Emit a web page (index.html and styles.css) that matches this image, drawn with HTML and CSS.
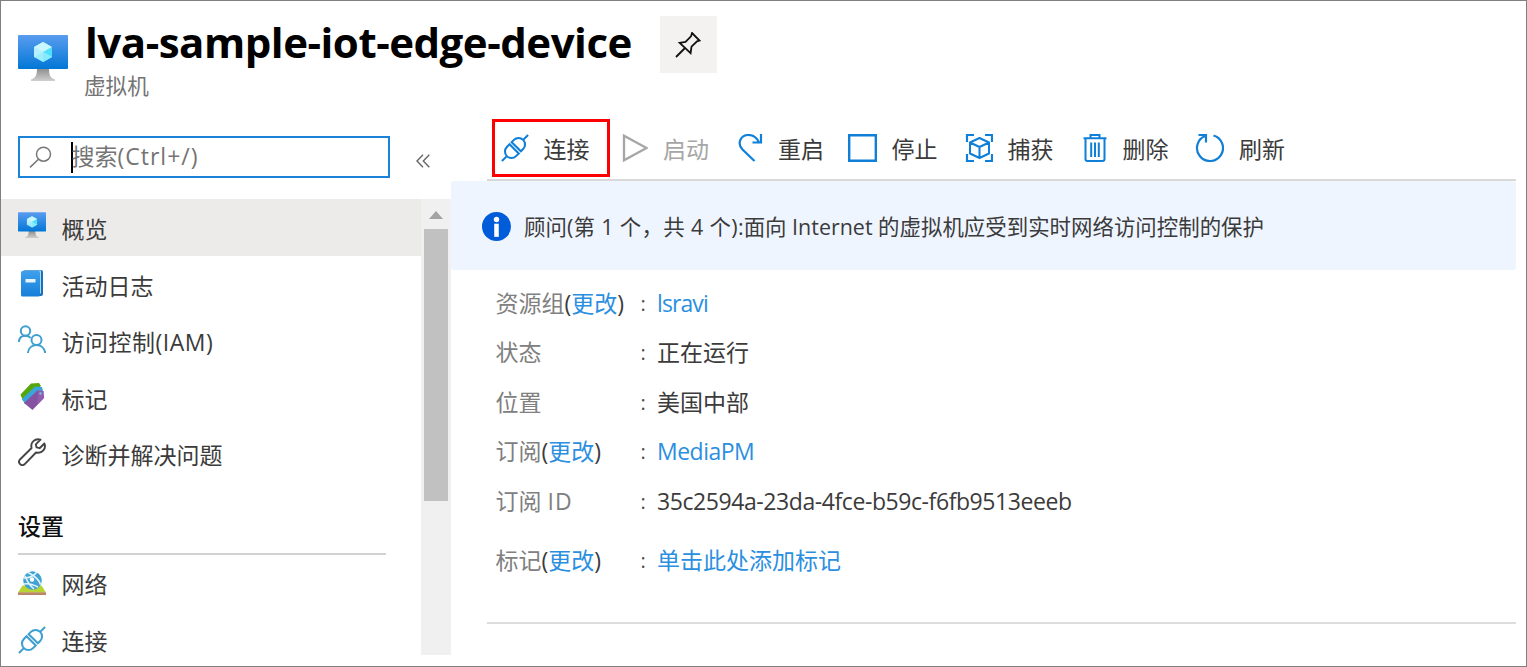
FILE: index.html
```html
<!DOCTYPE html>
<html lang="zh-CN">
<head>
<meta charset="utf-8">
<title>lva-sample-iot-edge-device</title>
<link rel="stylesheet" href="styles.css">
</head>
<body>
<svg class="defs" width="0" height="0" aria-hidden="true">
  <defs>
    <linearGradient id="screen" x1="0" y1="0" x2="0" y2="1"><stop offset="0" stop-color="#5a9cef"/><stop offset="1" stop-color="#0277d6"/></linearGradient>
    <linearGradient id="stand" x1="0" y1="0" x2="0" y2="1"><stop offset="0" stop-color="#8b8b8b"/><stop offset="1" stop-color="#cfcfcf"/></linearGradient>
    <linearGradient id="book" x1="0" y1="0" x2="0" y2="1"><stop offset="0" stop-color="#3fa0ec"/><stop offset="1" stop-color="#1580d8"/></linearGradient>
    <symbol id="vm" viewBox="0 0 50 47">
      <path fill="url(#stand)" d="M19 33h12c0 7 1 10 6 11.500v1.500H13v-1.500c5-1.500 6-4.500 6-11.500z"/>
      <rect width="50" height="34" rx="1" fill="url(#screen)"/>
      <path fill="#9ceeff" d="M25 7l9 5v10l-9 5-9-5V12z"/>
      <path fill="#c9f7ff" d="M25 7l9 5-9 5-9-5z"/>
      <path fill="#50e0fb" d="M34 12v10l-9-5z"/>
      <path fill="#85ebfd" d="M25 17l9 5-9 5z"/>
      <path fill="#b7f0fd" d="M16 12l9 5-9 5z"/>
    </symbol>
    <symbol id="plug" viewBox="0 0 28 28">
      <g fill="none" stroke="currentColor" stroke-width="2.100" transform="rotate(-45 14 14)">
        <path d="M-4.500 14H2.500M25.500 14h7"/>
        <path d="M12.800 7.500H9a6.500 6.500 0 0 0 0 13h3.800z"/>
        <path d="M15.800 7.500H19a6.500 6.500 0 0 1 0 13h-3.200z"/>
      </g>
    </symbol>
  </defs>
</svg>
<div class="window">
  <header class="header">
    <svg class="header-icon" width="50" height="47"><use href="#vm"/></svg>
    <div class="titles">
      <h1 class="title">lva-sample-iot-edge-device</h1>
      <div class="subtitle">虚拟机</div>
    </div>
    <button class="pin" aria-label="Pin">
      <svg width="26" height="26" viewBox="0 0 26 26" fill="none" stroke="#111" stroke-width="1.800"><path d="M1 25l8.500-8.500M17 1l7.500 7.500-2.500.8-5.500 5.400-.9 6.500L4.700 10.800l5.800-.8L16 4.400z"/></svg>
    </button>
  </header>
  <div class="body">
    <aside class="sidebar">
      <div class="search-row">
        <div class="search">
          <svg width="24" height="22" viewBox="0 0 24 22" fill="none" stroke="#777" stroke-width="1.500"><circle cx="14.500" cy="8.200" r="7"/><path d="M9.500 13.200L1 21.400"/></svg>
          <span class="caret"></span><span class="placeholder">搜索<span class="hint">(Ctrl+/)</span></span>
        </div>
        <svg class="collapse" width="14" height="14" viewBox="0 0 14 14" fill="none" stroke="#666" stroke-width="1.400"><path d="M7 .7L1 7l6 6.300M13.300 .7l-6 6.300 6 6.300"/></svg>
      </div>
      <div class="nav-wrap">
        <nav class="nav">
          <a class="item selected"><svg width="28" height="27"><use href="#vm"/></svg><span>概览</span></a>
          <a class="item"><svg width="28" height="28" viewBox="0 0 28 28"><rect x="5" y="1" width="20" height="26" rx="2" fill="#1670bb"/><path d="M5 1.500h18v23H5z" fill="#a9d8f8"/><rect x="3" y="2" width="19" height="25.500" rx="1.500" fill="url(#book)"/><path d="M7.500 10h10v3.500h-10z" fill="#e8f5ff"/></svg><span>活动日志</span></a>
          <a class="item"><svg width="28" height="28" viewBox="0 0 28 28" fill="none" stroke="#3f9fd0" stroke-width="2"><circle cx="7.500" cy="6" r="4.700"/><path d="M.9 17c.2-4 3-6.200 6.600-6.200 2 0 3.800.8 5 2.100"/><circle cx="18.500" cy="15" r="5"/><path d="M9.800 28c.6-5 4.200-8 8.700-8s8 3 8.700 8"/></svg><span class="iam">访问控制(IAM)</span></a>
          <a class="item"><svg width="28" height="28" viewBox="0 0 28 28"><path d="M2.500 12.500L13 1.500l8-.5 2 3-18 15z" fill="#56a60a"/><path d="M4 17L17 4.500l7 .5 1 4L7 22z" fill="#3aa5d8"/><path d="M6 21L19.500 8.500l6 .5.600 7L14.500 28z" fill="#8552a2"/><path d="M20 8.400l5.500.6.600 7-7 7z" fill="#a06cbd" opacity=".4"/><circle cx="22.500" cy="11.500" r="1.200" fill="#72c3e8"/></svg><span>标记</span></a>
          <a class="item"><svg width="28" height="28" viewBox="0 0 28 28" fill="none" stroke="#444" stroke-width="1.900" stroke-linejoin="round"><path d="M22.500 1.700L17.800 6.400l.8 3 3 .8 4.800-4.700c2 5-2 10.500-8.400 9L7 25.800c-3.500 3.500-8-1-4.800-4.600L13.600 10C12 4.500 17 0 22.500 1.700z"/></svg><span>诊断并解决问题</span></a>
          <div class="section">设置</div>
          <a class="item low"><svg width="28" height="28" viewBox="0 0 28 28"><path d="M4.500 16.500h19L28 23.500H0z" fill="#b8d432"/><path d="M0 23.300h28V26H0z" fill="#b98764"/><circle cx="14.500" cy="11.500" r="9.300" fill="#3fa3d3"/><g fill="none" stroke="#e5f5fc" stroke-width="1.600"><path d="M6 9c5 0 9-1 13-6M10 3.500c6 3 11 7 12.500 12M6 15c4-1 10 1 14 3M7 7c2 5 4 9 9 13"/></g><circle cx="14" cy="10.500" r="2.300" fill="#fff"/></svg><span>网络</span></a>
          <a class="item low"><svg class="plug-muted" width="28" height="28"><use href="#plug"/></svg><span>连接</span></a>
        </nav>
        <div class="scrollbar"><div class="arrow"></div><div class="thumb"></div></div>
      </div>
    </aside>
    <main class="main">
      <div class="toolbar">
        <a class="cmd connect"><svg width="28" height="28"><use href="#plug"/></svg><span>连接</span></a>
        <a class="cmd start"><svg width="28" height="28" viewBox="0 0 28 28" fill="none" stroke="#a6a6a6" stroke-width="2.300"><path d="M4 1.700v24.600L26.500 14z"/></svg><span>启动</span></a>
        <a class="cmd restart"><svg width="28" height="28" viewBox="0 0 28 28" fill="none" stroke="#0f7fd8" stroke-width="2.200"><path d="M19.500 27L7.500 15.500C1.500 9 6 1 13.500 1c5 0 8.500 3 10.500 7.500M17.500 8.500H26V0"/></svg><span>重启</span></a>
        <a class="cmd stop"><svg width="29" height="28" viewBox="0 0 29 28" fill="none" stroke="#0f7fd8" stroke-width="2.400"><path d="M1.200 1.200h26.600v25.600H1.200z"/></svg><span>停止</span></a>
        <a class="cmd"><svg width="28" height="28" viewBox="0 0 28 28" fill="none" stroke="#0f7fd8" stroke-width="2.200"><path d="M9 1H2v7M20 1h7v7M9 27H2v-7M20 27h7v-7"/><path stroke-width="2" stroke-linejoin="round" d="M14.500 4L24 8.500v11L14.500 24 5 19.500v-11zM5 8.500l9.500 4.500L24 8.500M14.500 13v11"/></svg><span>捕获</span></a>
        <a class="cmd delete"><svg width="28" height="28" viewBox="0 0 28 28" fill="none" stroke="#0f7fd8" stroke-width="2"><path d="M3.500 4.200h23M10.500 4V1h9v3M5.500 4.500V25c0 1.300.7 2 2 2h15c1.300 0 2-.7 2-2V4.500M11.200 8.500v14.500M15 8.500v14.500M18.800 8.500v14.500"/></svg><span>删除</span></a>
        <a class="cmd"><svg width="29" height="28" viewBox="0 0 29 28" fill="none" stroke="#0f7fd8" stroke-width="2.200"><path d="M18.500 1.500A13 13 0 1 1 10 2M3.500 1H11v7.500"/></svg><span>刷新</span></a>
      </div>
      <div class="banner">
        <svg width="29" height="29" viewBox="0 0 28 28"><circle cx="14" cy="14" r="14" fill="#015cda"/><circle cx="14" cy="7.300" r="2.600" fill="#fff"/><path d="M11.800 11.300h4.400V24h-4.400z" fill="#fff"/></svg>
        <span class="banner-text">顾问<span class="wide">(第 1 个，共 4 个)</span>:面向 Internet 的虚拟机应受到实时网络访问控制的保护</span>
      </div>
      <dl class="props">
        <dt>资源组<i>(</i><a>更改</a><i>)</i></dt><dd class="link"><span class="rg">lsravi</span></dd>
        <dt>状态</dt><dd>正在运行</dd>
        <dt>位置</dt><dd>美国中部</dd>
        <dt>订阅<i>(</i><a>更改</a><i>)</i></dt><dd class="link"><span class="sub">MediaPM</span></dd>
        <dt>订阅 <span class="id">ID</span></dt><dd><span class="guid">35c2594a-23da-4fce-b59c-f6fb9513eeeb</span></dd>
        <dt>标记<i>(</i><a>更改</a><i>)</i></dt><dd class="link">单击此处添加标记</dd>
      </dl>
    </main>
  </div>
</div>
</body>
</html>
```
FILE: styles.css
```css
* { box-sizing: border-box; }
body {
  margin: 0;
  font: 23px/34px "Open Sans", "Noto Sans CJK SC", sans-serif;
  color: #3b3b3b;
  background: #fff;
}
.defs { position: absolute; }
svg { flex: none; }
.window {
  width: 1527px;
  height: 667px;
  border: 1px solid #7f7f7f;
  overflow: hidden;
}
.header {
  display: flex;
  height: 117px;
  padding-left: 17px;
}
.header-icon { margin-top: 34px; }
.titles { width: 547px; margin-left: 17px; padding-top: 16px; }
.title {
  margin: 0;
  font-size: 42px;
  line-height: 50px;
  font-weight: 700;
  letter-spacing: -0.480px;
  color: #000;
  white-space: nowrap;
}
.subtitle { font-size: 21.600px; line-height: 37px; color: #747474; margin-left: -1px; }
.pin {
  width: 57px;
  height: 57px;
  margin: 15px 0 0 28px;
  padding: 0 2px 0 0;
  border: 0;
  background: #f3f2f1;
  display: flex;
  align-items: center;
  justify-content: center;
}
.body { display: flex; }
.sidebar { width: 450px; }
.search-row {
  display: flex;
  height: 81px;
  padding: 18px 0 0 17px;
}
.search {
  width: 372px;
  height: 42px;
  border: 2px solid #1a83d9;
  display: flex;
  align-items: center;
  padding-left: 9px;
}
.caret { width: 1.500px; height: 31px; margin-left: 18px; background: #000; }
.placeholder { color: #747474; margin-left: -1px; line-height: 36px; padding-bottom: 2px; }
.hint { letter-spacing: 1px; }
.collapse { margin: 18px 0 0 26px; }
.nav-wrap { display: flex; height: 456px; }
.nav { width: 420px; }
.item {
  display: flex;
  height: 56.600px;
  padding: 12px 0 0 17px;
}
.item svg { margin-top: 1px; }
.item span { margin-left: 15.500px; line-height: 36px; }
.item .iam { letter-spacing: 0.500px; }
.low span { line-height: 32px; }
.low:last-child { height: 46px; }
.selected { background: #edebe9; }
.plug-muted { color: #3f9fd0; }
.section {
  width: 368px;
  height: 73px;
  margin: 0 0 1px 17px;
  padding-top: 27px;
  border-bottom: 2px solid #d2d2d2;
  font-weight: 500;
  color: #111;
}
.scrollbar {
  width: 30px;
  background: #f0f0f0;
  display: flex;
  flex-direction: column;
  align-items: center;
}
.arrow {
  margin: 12px 0 10px;
  border: 7px solid transparent;
  border-top: 0;
  border-bottom: 8px solid #a3a3a3;
}
.thumb { width: 24px; height: 272px; background: #c1c1c1; }
.main { width: 1065px; }
.toolbar {
  display: flex;
  height: 63px;
  margin-left: 36px;
  padding: 1px 0 0 5px;
  border-bottom: 2px solid #d9d9d9;
}
.cmd { display: flex; width: 115px; padding-top: 15px; }
.cmd span { margin-left: 15px; line-height: 30px; white-space: nowrap; }
.restart { width: 113px; }
.stop { width: 116.500px; }
.stop span { margin-left: 14.500px; }
.delete { width: 115.500px; }
.connect {
  width: 118px;
  height: 58px;
  margin-right: 10px;
  padding: 12px 0 0 5.500px;
  border: 3px solid #f00;
  color: #0f7fd8;
}
.connect span { color: #3b3b3b; margin-left: 15px; }
.start span { color: #a6a6a6; }
.banner {
  display: flex;
  align-items: center;
  height: 89px;
  padding: 1px 0 0 31px;
  background: #eff5ff;
  border-radius: 3px;
}
.banner-text { margin-left: 13px; padding-top: 2px; white-space: nowrap; font-size: 21.450px; }
.wide { letter-spacing: 0.350px; }
.props {
  display: grid;
  grid-template-columns: 143px 1fr;
  grid-template-rows: repeat(5, 49.500px) 68px;
  margin: 8px 0 0 36px;
  padding-left: 8.500px;
  height: 346px;
  align-items: center;
  border-bottom: 2px solid #dcdcdc;
}
dt { color: #808080; white-space: nowrap; }
dt i { font-style: normal; color: #3b3b3b; }
dt a, .link { color: #2b8fe0; }
dd { margin: 0; display: flex; }
dd::before { content: ":"; width: 16.500px; padding: 2px 0 0 2px; font-size: 20px; line-height: 32px; color: #4b4b4b; }
.id { letter-spacing: 1px; }
.rg { letter-spacing: -0.900px; }
.sub { letter-spacing: -0.500px; }
.guid { letter-spacing: -0.420px; }
```
